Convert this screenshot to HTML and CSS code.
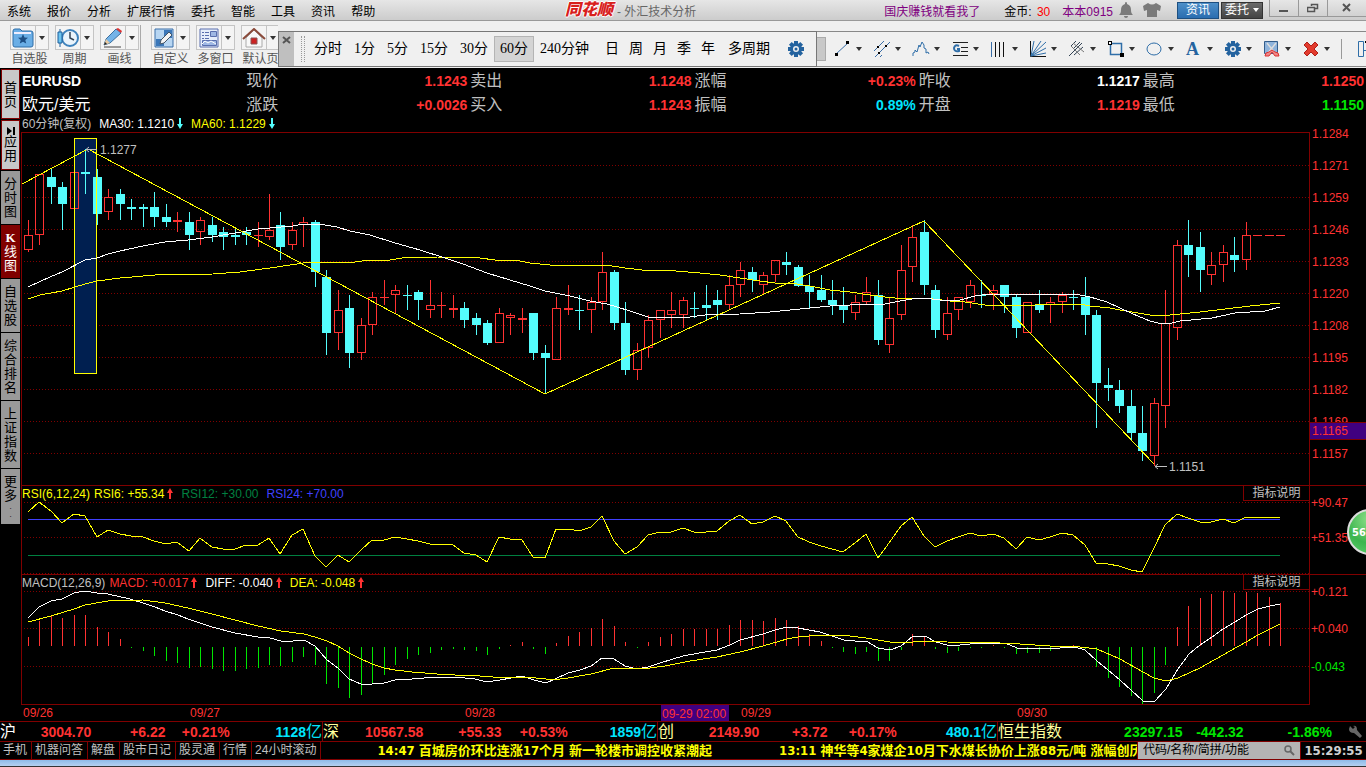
FILE: index.html
```
<!DOCTYPE html>
<html lang="zh-CN">
<head>
    <meta charset="UTF-8">
    <meta name="viewport" content="width=device-width, initial-scale=1.0">
    <title>同花顺 - 外汇技术分析</title>
    <link rel="stylesheet" href="styles.css">
</head>
<body>
    <header class="titlebar">
        <nav class="menu">
            <a href="#">系统</a><a href="#">报价</a><a href="#">分析</a><a href="#">扩展行情</a><a href="#">委托</a><a href="#">智能</a><a href="#">工具</a><a href="#">资讯</a><a href="#">帮助</a>
        </nav>
        <div class="title"><b class="logo">同花顺</b><span>- 外汇技术分析</span></div>
        <div class="account">
            <a class="promo" href="#">国庆赚钱就看我了</a>
            <span class="coins">金币: <b>30</b></span>
            <a class="user" href="#">本本0915</a>
            <svg class="bell" width="14" height="16" viewBox="0 0 14 16"><path d="M7 0c1 0 1 1 1 2 3 1 4 3 4 6 0 3 1 4 2 5H0c1-1 2-2 2-5 0-3 1-5 4-6 0-1 0-2 1-2zM5 14h4c0 1-1 2-2 2s-2-1-2-2z"/></svg>
            <svg class="shirt" width="18" height="14" viewBox="0 0 18 14"><path d="M5 0q4 3 8 0l5 3-1 5-3-1v7H4V7L1 8 0 3z"/></svg>
        </div>
        <button class="news-btn" type="button">资讯</button>
        <button class="trade-btn" type="button">委托<i class="caret"></i></button>
        <div class="window-btns">
            <button type="button" aria-label="最小化"><svg width="10" height="10"><path d="M0 7h9v2H0z" fill="#555"/></svg></button>
            <button type="button" aria-label="还原"><svg width="12" height="10" fill="none" stroke="#555"><path d="M4.500 3V1.500h6v4H8M.5 4.500h7v4h-7z" stroke-width="1.500"/></svg></button>
            <button type="button" aria-label="关闭"><svg width="10" height="10"><path d="M1 1l7 7M8 1L1 8" stroke="#555" stroke-width="2"/></svg></button>
        </div>
    </header>

    <div class="toolbar">
        <div class="main-tools">
            <div class="tool-group">
                <button class="tool" type="button">
                    <span class="tool-face"><svg width="22" height="20" viewBox="0 0 22 20"><path d="M1 17V3q0-2 2-2h5l2 2h9q2 0 2 2v12q0 2-2 2H3q-2 0-2-2z" fill="#6aaee6" stroke="#2f6ea8"/><path d="M2 5h17" stroke="#eef" stroke-width="2"/><path d="M11 6l1.500 3.500 3.500.3-2.700 2.300.9 3.500-3.200-1.900-3.200 1.900.9-3.500L6 9.800l3.500-.3z" fill="#1d4f85"/></svg></span><span class="tool-drop"><i class="caret"></i></span>
                    <span class="tool-name">自选股</span>
                </button>
                <button class="tool" type="button">
                    <span class="tool-face"><svg width="22" height="20" viewBox="0 0 22 20"><circle cx="13" cy="10" r="8" fill="#eaf4fc" stroke="#3f83bd" stroke-width="2"/><path d="M13 4v6l4 2" fill="none" stroke="#345" stroke-width="1.500"/><path d="M3 1v18" stroke="#1d5e9b"/><path d="M1 4h4v11H1z" fill="#6cc4f0" stroke="#1d5e9b"/></svg></span><span class="tool-drop"><i class="caret"></i></span>
                    <span class="tool-name">周期</span>
                </button>
                <button class="tool" type="button">
                    <span class="tool-face"><svg width="22" height="20" viewBox="0 0 22 20"><path d="M2 19h17" stroke="#444"/><path d="M2 17l2-6L14 1l5 4L8 15z" fill="#74b3e8" stroke="#3a6f9f"/><path d="M14 1l5 4 1-2-4-3z" fill="#d33"/><path d="M2 17l2-6 4 4z" fill="#e8c9a0"/><path d="M2 17l1-3 2 2z" fill="#222"/></svg></span><span class="tool-drop"><i class="caret"></i></span>
                    <span class="tool-name">画线</span>
                </button>
            </div>
            <div class="tool-group">
                <button class="tool" type="button">
                    <span class="tool-face"><svg width="22" height="20" viewBox="0 0 22 20"><path d="M2 1h18v18H2z" fill="#b8d6f2" stroke="#3a6ea8"/><path d="M11 2h8v8h-8zM3 11h8v7H3z" fill="#3b77b9"/><path d="M7 16l1-4 8-8 3 3-8 8z" fill="#f4f4f4" stroke="#456"/></svg></span><span class="tool-drop"><i class="caret"></i></span>
                    <span class="tool-name">自定义</span>
                </button>
                <button class="tool" type="button">
                    <span class="tool-face"><svg width="22" height="20" viewBox="0 0 22 20"><path d="M2 1h18v18H2z" fill="#e6eefb" stroke="#5a6fae"/><path d="M4 4.500h2M4 7.500h2M4 10.500h2M7 4.500h4M7 7.500h4M7 10.500h4" stroke="#5a6fae"/><path d="M12.500 3.500h6v5h-6zM4.500 12.500h14v5h-14z" fill="#9fb8e4" stroke="#5a6fae"/><path d="M4 16l3-3 3 2 3-2 5 3" fill="none" stroke="#fff"/></svg></span><span class="tool-drop"><i class="caret"></i></span>
                    <span class="tool-name">多窗口</span>
                </button>
                <button class="tool" type="button">
                    <span class="tool-face"><svg width="24" height="20" viewBox="0 0 24 20"><path d="M4 10v9h16v-9l-8-8z" fill="#f8f8f8" stroke="#aaa"/><path d="M1 11L12 1l11 10" fill="none" stroke="#8a4a3a" stroke-width="2"/><path d="M9 10h6v6H9z" fill="#c22" stroke="#855"/></svg></span><span class="tool-drop"><i class="caret"></i></span>
                    <span class="tool-name">默认页</span>
                </button>
            </div>
        </div>

        <div class="period-panel">
            <button class="panel-close" type="button" aria-label="关闭"><svg width="9" height="8"><path d="M1 1l7 6M8 1L1 7" stroke="#555" stroke-width="2"/></svg></button>
            <i class="grip"></i>
            <button type="button">分时</button>
            <button type="button">1分</button>
            <button type="button">5分</button>
            <button type="button">15分</button>
            <button type="button">30分</button>
            <button type="button" class="active">60分</button>
            <button type="button">240分钟</button>
            <div class="long-periods">
                <button type="button">日</button><button type="button">周</button><button type="button">月</button><button type="button">季</button><button type="button">年</button>
            </div>
            <button type="button">多周期</button>
            <button class="gear" type="button" aria-label="设置"><svg width="18" height="18" viewBox="0 0 18 18"><use href="#gear"/></svg></button>
        </div>

        <div class="draw-tools">
            <i class="hidden-tool"></i>
            <button type="button" aria-label="线段"><svg width="18" height="18"><path d="M2 14L14 3" stroke="#3a6ea8"/><path d="M1 13h3v3H1zM12 1h3v3h-3z"/></svg><i class="caret"></i></button>
            <button type="button" aria-label="平行线"><svg width="18" height="18"><path d="M1 11L11 1M2 17L17 2M7 17l2-2" stroke="#3a6ea8"/><path d="M4 6h2v2H4zM5 12h2v2H5zM12 5h2v2h-2z"/></svg><i class="caret"></i></button>
            <button type="button" aria-label="波浪"><svg width="18" height="18"><path d="M1 16v-3l2-1v-2l2 2 2-7 1 2 2-5 2 3v3l2 1v4l2-1 1 2" fill="none" stroke="#2f6ea8"/></svg><i class="caret"></i></button>
            <button type="button" aria-label="黄金分割"><svg width="18" height="18"><path d="M2 2.500h15M10 7.500h7M10 11.500h7M2 15.500h15" stroke="#222"/><path d="M8 6q-4-2-5 2 0 4 5 3V9H6" fill="none" stroke="#2f6ea8" stroke-width="2"/></svg><i class="caret"></i></button>
            <button type="button" aria-label="周期线"><svg width="18" height="18"><path d="M1.500 2v15" stroke="#3a6ea8"/><path d="M5.500 2v15M9.500 2v15M13.500 2v15" stroke="#111"/></svg><i class="caret"></i></button>
            <button type="button" aria-label="江恩角度线"><svg width="18" height="18"><path d="M1.500 1v15.500H17" stroke="#111" fill="none"/><path d="M2 16L5 1M2 16L12 1M2 16L17 2M2 16L17 8M2 16l15-3" stroke="#2f6ea8"/></svg><i class="caret"></i></button>
            <button type="button" aria-label="斜线组"><svg width="18" height="18"><path d="M3 6l5-5M5 9l7-7M1 16L14 3M6 15l9-8" stroke="#345"/><path d="M5 3l11 9M3 6l9 9" stroke="#777"/></svg><i class="caret"></i></button>
            <button type="button" aria-label="矩形"><svg width="18" height="18"><path d="M3.500 3.500h11v11h-11z" fill="none" stroke="#2f6ea8" stroke-width="1.500"/><path d="M1 1h4v4H1zM13 13h4v4h-4z"/><path d="M2 2h2v2H2z" fill="#fff"/></svg><i class="caret"></i></button>
            <button type="button" aria-label="椭圆"><svg width="18" height="18"><ellipse cx="8" cy="9" rx="7" ry="6" fill="none" stroke="#2f6ea8"/></svg><i class="caret"></i></button>
            <button class="text-tool" type="button" aria-label="文字">A<i class="caret"></i></button>
            <button type="button" aria-label="设置"><svg width="18" height="18" viewBox="0 0 18 18"><use href="#gear"/></svg><i class="caret"></i></button>
            <button type="button" aria-label="截图"><svg width="18" height="18"><path d="M1.500 1.500h13v12h-13z" fill="#8fb4dc" stroke="#345e8c"/><path d="M4 3l8 10M13 3L5 13" stroke="#ddd" stroke-width="1.500"/><path d="M2 16q0-4 4-4l3-2 3 2q4 0 4 4h-4l-3-4-3 4z" fill="#e88" stroke="#d33"/></svg><i class="caret"></i></button>
            <button type="button" aria-label="删除"><svg width="18" height="18"><path d="M2 5l3-3 4 4 4-4 3 3-4 4 4 4-3 3-4-4-4 4-3-3 4-4z" fill="#e23b2e" stroke="#b02018"/></svg><i class="caret"></i></button>
            <i class="divider"></i>
            <button class="cut" type="button" aria-label="布局"><svg width="18" height="18"><path d="M1.500 1.500h5v15h-5zM7 10.500h10" fill="none" stroke="#2f6ea8"/><path d="M8 1h9v2H8z"/></svg></button>
        </div>
    </div>

    <main class="workspace">
        <nav class="side-tabs">
            <a class="light short" href="#">首页</a>
            <a class="light" href="#"><svg width="8" height="8"><path d="M0 0l5 4-5 4zM6 0h2v8H6z"/></svg>应用</a>
            <a href="#">分时图</a>
            <a class="active" href="#"><b>K</b>线图</a>
            <a href="#">自选股</a>
            <a href="#">综合排名</a>
            <a href="#">上证指数</a>
            <a href="#">更多<span>.</span><span>.</span></a>
        </nav>

        <section class="content">
            <dl class="quote">
                <div class="name">EURUSD</div>
                <div><dt>现价</dt><dd class="up">1.1243</dd></div>
                <div><dt>卖出</dt><dd class="up">1.1248</dd></div>
                <div><dt>涨幅</dt><dd class="up">+0.23%</dd></div>
                <div><dt>昨收</dt><dd class="flat">1.1217</dd></div>
                <div><dt>最高</dt><dd class="up">1.1250</dd></div>
                <div class="name cn">欧元/美元</div>
                <div><dt>涨跌</dt><dd class="up">+0.0026</dd></div>
                <div><dt>买入</dt><dd class="up">1.1243</dd></div>
                <div><dt>振幅</dt><dd class="volume">0.89%</dd></div>
                <div><dt>开盘</dt><dd class="up">1.1219</dd></div>
                <div><dt>最低</dt><dd class="down">1.1150</dd></div>
            </dl>

            <div class="legend">
                <span class="gray">60分钟(复权)</span>
                <span class="flat">MA30: 1.1210<svg class="arrow fall" width="6" height="11"><use href="#arrow-down"/></svg></span>
                <span class="yellow">MA60: 1.1229<svg class="arrow fall" width="6" height="11"><use href="#arrow-down"/></svg></span>
            </div>

            <svg id="price" class="plot" viewBox="21 132 1345 353"></svg>

            <div class="pane">
                <svg id="rsi" class="plot" viewBox="21 485 1345 89"></svg>
                <div class="legend over">
                    <span class="yellow">RSI(6,12,24)</span>
                    <span class="yellow">RSI6: +55.34<svg class="arrow rise" width="6" height="11"><use href="#arrow-up"/></svg></span>
                    <span class="green">RSI12: +30.00</span>
                    <span class="blue">RSI24: +70.00</span>
                </div>
                <button class="explain" type="button">指标说明</button>
                <button class="speed-ball" type="button">56</button>
            </div>

            <div class="pane">
                <svg id="macd" class="plot" viewBox="21 574 1345 131"></svg>
                <div class="legend over">
                    <span class="gray">MACD(12,26,9)</span>
                    <span class="up">MACD: +0.017<svg class="arrow rise" width="6" height="11"><use href="#arrow-up"/></svg></span>
                    <span class="flat">DIFF: -0.040<svg class="arrow rise" width="6" height="11"><use href="#arrow-up"/></svg></span>
                    <span class="yellow">DEA: -0.048<svg class="arrow rise" width="6" height="11"><use href="#arrow-up"/></svg></span>
                </div>
                <button class="explain" type="button">指标说明</button>
            </div>

            <svg id="dates" class="plot" viewBox="21 705 1345 16"></svg>
        </section>
    </main>

    <div class="indexes">
        <div class="index sh"><span class="up"><i class="flat">沪</i>3004.70</span><span class="up">+6.22</span><span class="up">+0.21%</span><span class="volume">1128<i>亿</i></span></div>
        <div class="index sz"><span class="up"><i>深</i>10567.58</span><span class="up">+55.33</span><span class="up">+0.53%</span><span class="volume">1859<i>亿</i></span></div>
        <div class="index cy"><span class="up"><i>创</i>2149.90</span><span class="up">+3.72</span><span class="up">+0.17%</span><span class="volume">480.1<i>亿</i></span></div>
        <div class="index hs"><span class="down"><i>恒生指数</i>23297.15</span><span class="down">-442.32</span><span class="down">-1.86%</span>
            <svg width="14" height="14" viewBox="0 0 14 14"><path d="M2 1l3 3 2-2-2-1q4-1 4 4l5 6-2 2-6-5q-5 0-5-4z" fill="#666"/></svg>
        </div>
    </div>

    <footer class="statusbar">
        <nav class="links">
            <a href="#">手机</a><a href="#">机器问答</a><a href="#">解盘</a><a href="#">股市日记</a><a href="#">股灵通</a><a href="#">行情</a><a href="#">24小时滚动</a>
        </nav>
        <div class="ticker">
            <a href="#">14:47 百城房价环比连涨17个月 新一轮楼市调控收紧潮起</a>
            <a href="#">13:11 神华等4家煤企10月下水煤长协价上涨88元/吨 涨幅创历</a>
        </div>
        <label class="search">
            <input type="text" placeholder="代码/名称/简拼/功能" aria-label="代码/名称/简拼/功能">
            <svg width="11" height="11"><circle cx="4" cy="4" r="3" fill="none" stroke="#666" stroke-width="1.500"/><path d="M6 6l4 4" stroke="#666" stroke-width="2"/></svg>
        </label>
        <time class="clock">15:29:55</time>
    </footer>
    <div class="desktop-edge"></div>

    <svg class="defs" width="0" height="0">
        <symbol id="gear" viewBox="0 0 18 18">
            <g fill="#24639f">
                <path d="M7 1h4v16H7zM1 7h16v4H1z"/>
                <path d="M7 1h4v16H7zM1 7h16v4H1z" transform="rotate(45 9 9)"/>
                <circle cx="9" cy="9" r="6"/>
            </g>
            <circle cx="9" cy="9" r="3" fill="#f0f0f0"/><circle cx="9" cy="9" r="1.500" fill="#24639f"/>
        </symbol>
        <symbol id="arrow-down" viewBox="0 0 6 11"><path d="M2 0h2v6h2L3 11 0 6h2z"/></symbol>
        <symbol id="arrow-up" viewBox="0 0 6 11"><path d="M2 11h2V5h2L3 0 0 5h2z"/></symbol>
    </svg>
    <script src="script.js"></script>
</body>
</html>
```
FILE: styles.css
```
* {
    box-sizing: border-box;
}
body {
    margin: 0;
    background: #000;
    font-family: "Liberation Sans", "Noto Sans CJK SC", sans-serif;
    font-size: 12px;
    overflow-x: hidden;
}
a {
    color: inherit;
    text-decoration: none;
}
button {
    margin: 0;
    padding: 0;
    border: none;
    background: none;
    font: inherit;
    color: inherit;
    cursor: pointer;
}
i {
    font-style: normal;
}
.caret {
    display: inline-block;
    border: 3px solid transparent;
    border-top: 4px solid #333;
    border-bottom: none;
}
.defs {
    position: absolute;
}

/* title bar */
.titlebar {
    display: flex;
    align-items: center;
    height: 21px;
    background: linear-gradient(#e6e6e6, #cccccc);
    border-bottom: 1px solid #999;
    white-space: nowrap;
}
.menu {
    display: flex;
    gap: 16px;
    padding-left: 7px;
    color: #000;
}
.title {
    display: flex;
    align-items: center;
    gap: 4px;
    margin-left: auto;
    padding-left: 2px;
    color: #666;
}
.logo {
    font-size: 16px;
    line-height: 18px;
    font-style: italic;
    font-weight: 900;
    color: #d8201c;
    text-shadow: 1px 0 #fff, -1px 0 #fff, 0 1px #fff, 0 -1px #fff;
}
.account {
    display: flex;
    align-items: center;
    margin-left: auto;
    color: #000;
}
.account svg {
    fill: #7a7a7a;
}
.promo {
    color: #800080;
}
.coins {
    margin: 0 12px 0 24px;
}
.coins b {
    margin-left: 2px;
    font-weight: normal;
    color: #f00;
}
.user {
    color: #800080;
}
.bell {
    margin: 0 10px 0 6px;
}
.shirt {
    margin-right: 16px;
}
.news-btn, .trade-btn {
    width: 42px;
    height: 17px;
    line-height: 15px;
    border: 1px solid #1d4f80;
    background: linear-gradient(#4d8fc8, #2a6db0);
    color: #fff;
}
.trade-btn {
    margin: 0 6px 0 2px;
    border-color: #333;
    background: linear-gradient(#6a6a6a, #444);
}
.trade-btn .caret {
    margin-left: 4px;
    vertical-align: middle;
    border-top-color: #fff;
}
.window-btns {
    display: flex;
    align-self: flex-start;
}
.window-btns button {
    display: flex;
    align-items: center;
    justify-content: center;
    width: 29px;
    height: 17px;
    border: 1px solid #999;
    border-width: 0 0 1px 1px;
}
.window-btns button:last-child {
    width: 39px;
}

/* toolbar */
.toolbar {
    display: flex;
    height: 47px;
    padding-top: 1px;
    background: #f0f0f0;
    overflow: hidden;
}
.main-tools {
    display: flex;
    flex: none;
    width: 278px;
    overflow: hidden;
}
.tool-group {
    display: flex;
    flex: none;
    gap: 6px;
    width: 141px;
    margin-top: 3px;
    padding-left: 10px;
    border-right: 1px solid #aaa;
}
.tool {
    display: grid;
    grid-template-columns: 26px 13px;
    grid-template-rows: 25px 16px;
    width: 39px;
    color: #555;
}
.tool-face, .tool-drop {
    display: flex;
    align-items: center;
    justify-content: center;
    border: 1px solid #c4c4c4;
    background: #f4f4f4;
}
.tool-drop {
    border-left: none;
}
.tool-name {
    grid-column: 1 / 3;
    line-height: 18px;
    text-align: center;
    white-space: nowrap;
}
.period-panel {
    display: flex;
    flex: none;
    align-items: center;
    width: 539px;
    height: 36px;
    margin-top: 9px;
    border: 1px solid #777;
    font: 14px/24px "Liberation Serif", "Noto Sans CJK SC", serif;
    color: #000;
    white-space: nowrap;
}
.period-panel button {
    padding: 0 6px;
}
.period-panel .panel-close {
    width: 15px;
    height: 34px;
    padding: 0 0 18px;
    line-height: 8px;
    background: #bfbfbf;
}
.grip {
    width: 4px;
    height: 26px;
    margin: 0 3px 0 7px;
    border: 1px dotted #999;
    border-width: 0 1px;
}
.period-panel .active {
    height: 26px;
    padding: 0 5px;
    border: 1px solid #b4b4b4;
    background: #d4d4d4;
}
.long-periods {
    display: flex;
    margin: 0 2px 0 5px;
}
.long-periods button {
    padding: 0 5px;
}
.period-panel .gear {
    display: flex;
    margin-left: auto;
    padding: 0 11px 0 0;
}
.draw-tools {
    display: flex;
    flex: 1;
    align-items: center;
    height: 36px;
    margin-top: 9px;
    border: 1px solid #888;
    border-width: 1px 0;
    overflow: hidden;
}
.draw-tools button {
    display: flex;
    flex: none;
    align-items: center;
    gap: 4px;
    width: 39px;
}
.hidden-tool {
    flex: none;
    width: 9px;
    height: 24px;
    margin-right: 8px;
    border: 1px solid #aaa;
    border-left: none;
    background: #c8c8c8;
}
.draw-tools .text-tool {
    gap: 8px;
    padding-left: 1px;
    font: bold 18px "Liberation Serif", serif;
    color: #24639f;
}
.divider {
    flex: none;
    width: 1px;
    height: 20px;
    margin-right: 15px;
    background: #999;
}

/* side tabs */
.workspace {
    display: flex;
}
.side-tabs {
    display: flex;
    flex-direction: column;
    gap: 1px;
    flex: none;
    width: 21px;
    padding: 1px 1px 0;
}
.side-tabs a {
    display: flex;
    flex-direction: column;
    align-items: center;
    padding: 6px 3px 5px;
    background: #999;
    color: #000;
    font-size: 13px;
    line-height: 14px;
    word-break: break-all;
}
.side-tabs .light {
    padding: 6px 2px;
    border: 1px solid #800000;
    background: #c8c8c8;
}
.side-tabs .short {
    padding: 11px 2px 9px;
}
.side-tabs .active {
    background: #800000;
    color: #fff;
}
.side-tabs b {
    font-family: "Liberation Serif", serif;
}
.side-tabs span {
    font-size: 8px;
    line-height: 8px;
}
.content {
    flex: 1;
    min-width: 0;
}

/* quote */
.quote {
    display: grid;
    grid-template-columns: repeat(6, 1fr);
    grid-auto-rows: 24px;
    margin: 0;
    padding-top: 1px;
    font-size: 16px;
    line-height: 24px;
    color: #c0c0c0;
}
.quote div {
    display: flex;
    justify-content: space-between;
    padding: 0 2px 0 1px;
}
.quote dd {
    margin: 0;
    font-size: 14px;
    font-weight: bold;
}
.quote .name {
    color: #fff;
    font-size: 14px;
    font-weight: bold;
}
.quote .cn {
    justify-content: flex-start;
    font-size: 16px;
    font-weight: normal;
}
.up {
    color: #ff3232;
}
.down {
    color: #00e600;
}
.flat {
    color: #fff;
}
.volume {
    color: #00e6ff;
}
.yellow {
    color: #ff0;
}
.gray {
    color: #c0c0c0;
}
.green {
    color: #008040;
}
.blue {
    color: #4040ff;
}

/* charts */
.legend {
    display: flex;
    gap: 8px;
    height: 15px;
    padding-left: 1px;
    line-height: 15px;
    white-space: nowrap;
}
.legend.over {
    position: absolute;
    top: 2px;
    left: 0;
}
.legend.over span:first-child {
    margin-right: -4px;
}
.arrow {
    margin-left: 3px;
    vertical-align: -1px;
}
.fall {
    fill: #54fcfc;
}
.rise {
    fill: #ff3232;
}
.pane {
    position: relative;
    overflow: hidden;
}
.plot {
    display: block;
    width: 100%;
    font-size: 12px;
    overflow: visible;
}
.plot line, .plot rect, .plot polyline {
    shape-rendering: crispEdges;
}
.plot polyline {
    fill: none;
}
.explain {
    position: absolute;
    top: 1px;
    right: 57px;
    width: 66px;
    height: 15px;
    border: 1px solid #800000;
    border-width: 0 0 1px 1px;
    line-height: 14px;
    color: #c0c0c0;
}
.speed-ball {
    position: absolute;
    top: 24px;
    right: -27px;
    width: 46px;
    height: 46px;
    padding: 0 22px 0 0;
    border: 2px solid #ddd;
    border-radius: 50%;
    background: radial-gradient(circle at 50% 20%, #8fe08a, #3cb54e 60%, #5ccf6c);
    font: bold 11px "DejaVu Sans Condensed", sans-serif;
    color: #fff;
}

/* index row */
.indexes {
    display: grid;
    grid-template-columns: 323fr 335fr 340fr 368fr;
    height: 20px;
    border-top: 1px solid #800000;
    font-size: 14px;
    font-weight: bold;
    line-height: 20px;
    white-space: nowrap;
}
.index {
    display: grid;
    align-items: center;
    border-right: 1px solid #800000;
}
.index:last-child {
    border-right: none;
}
.index span {
    display: flex;
    justify-content: flex-end;
}
.index i {
    font-size: 16px;
    font-weight: normal;
}
.index span:first-child {
    justify-content: space-between;
}
.index span:first-child i:not(.flat) {
    color: #ffff9c;
}
.sh {
    grid-template-columns: 91fr 74fr 64fr 92fr;
}
.sz {
    grid-template-columns: 100fr 78fr 66fr 89fr;
}
.cy {
    grid-template-columns: 101fr 68fr 69fr 100fr;
}
.hs {
    grid-template-columns: 184fr 61fr 88fr 34fr;
}
.hs svg {
    justify-self: end;
    margin-right: 4px;
}

/* status bar */
.statusbar {
    display: flex;
    height: 19px;
    border: 1px solid #800000;
    border-width: 1px 0;
    line-height: 17px;
    white-space: nowrap;
}
.links {
    display: flex;
    color: #c0c0c0;
}
.links a {
    padding: 0 4px 0 3px;
    border-right: 1px solid #800000;
}
.ticker {
    display: flex;
    flex: 1;
    gap: 67px;
    min-width: 0;
    padding-left: 56px;
    overflow: hidden;
    font: bold 13px/17px "DejaVu Sans Condensed", "Noto Sans CJK SC", sans-serif;
    color: #ff0;
}
.search {
    display: flex;
    flex: none;
    align-items: center;
    width: 163px;
    background: #b4b4b4;
    border-left: 1px solid #800000;
}
.search input {
    flex: 1;
    min-width: 0;
    padding: 0 0 0 5px;
    border: none;
    background: none;
    font: inherit;
    color: #000;
}
.search input::placeholder {
    color: #000;
    opacity: 1;
}
.search svg {
    margin-right: 5px;
}
.clock {
    flex: none;
    width: 66px;
    border-left: 1px solid #800000;
    text-align: center;
    font: bold 13px/17px "DejaVu Sans Condensed", sans-serif;
    color: #d0d0d0;
}
.desktop-edge {
    height: 7px;
    background: linear-gradient(#8ebbe8, #b4d0f0);
    border-bottom: 1px solid #333;
}
```
FILE: script.js
```
const RED = '#ff3232';
const CYAN = '#54fcfc';
const YELLOW = '#ffff00';
const GREEN = '#00e600';
const BORDER = '#800000';

// r = up bar, c = down bar: [type, high, body top, body bottom, low]
const candles = [
    ['r',220,235,250,252], ['r',174,174,235,245], ['c',169,177,187,204], ['c',182,187,204,230], ['r',172,172,209,209],
    ['c',149,172,174,194], ['c',169,177,214,225], ['r',189,197,212,220], ['c',189,194,204,220], ['c',199,207,209,220],
    ['c',204,207,209,227], ['c',192,207,217,227], ['c',204,217,222,227], ['r',212,220,222,232], ['c',212,222,235,250],
    ['r',217,220,232,245], ['c',217,225,235,242], ['c',227,232,237,250], ['c',227,235,237,245], ['c',227,232,235,245],
    ['r',222,235,236,247], ['r',194,230,237,240], ['c',212,225,247,260], ['r',222,230,245,250], ['r',217,222,225,247],
    ['c',220,222,272,287], ['c',270,277,333,355], ['r',290,310,333,350], ['c',295,308,353,368], ['r',318,325,353,360],
    ['r',292,297,325,335], ['r',280,297,298,305], ['r',285,290,295,313], ['c',285,295,296,310], ['c',290,292,300,320],
    ['r',280,305,310,318], ['r',292,305,306,318], ['r',295,308,310,318], ['c',302,308,320,328], ['c',313,318,325,335],
    ['c',320,323,343,345], ['r',308,313,343,343], ['r',313,315,318,335], ['r',308,318,320,333], ['c',313,313,353,360],
    ['c',345,353,358,393], ['r',297,308,360,360], ['r',285,308,310,315], ['c',295,310,311,330], ['r',297,302,310,333],
    ['r',252,272,302,310], ['c',270,272,323,330], ['c',302,323,370,375], ['r',343,350,370,380], ['r',315,320,348,358],
    ['r',310,310,320,338], ['r',292,310,315,328], ['r',297,300,315,328], ['c',292,308,309,318], ['c',285,305,308,320],
    ['c',290,300,305,320], ['r',275,285,305,310], ['r',262,270,285,297], ['c',267,272,280,292], ['r',272,275,285,295],
    ['r',260,260,275,282], ['c',252,262,265,275], ['c',265,267,286,287], ['c',275,286,292,308], ['c',275,290,300,302],
    ['c',280,300,305,315], ['c',287,305,310,323], ['r',295,302,313,320], ['r',277,292,302,305], ['c',280,295,340,345],
    ['r',297,318,345,353], ['r',245,270,315,320], ['r',225,237,267,282], ['c',220,232,285,295], ['c',285,290,330,338],
    ['r',297,313,335,340], ['r',297,297,310,320], ['r',280,285,302,308], ['c',280,295,296,308], ['r',285,290,294,310],
    ['c',285,285,297,313], ['c',295,297,328,338], ['r',302,302,333,333], ['c',290,305,310,313], ['r',297,302,305,323],
    ['r',292,295,302,313], ['c',290,297,298,310], ['c',277,297,315,335], ['c',310,315,383,428], ['c',368,385,388,401],
    ['c',380,390,406,413], ['c',390,406,433,441], ['c',406,433,451,461], ['r',398,403,456,466], ['r',290,323,406,428],
    ['r',240,245,328,340], ['c',220,245,255,277], ['c',232,247,270,292], ['r',252,265,275,285], ['r',245,252,265,282],
    ['c',237,255,260,272], ['r',222,235,260,270]
];

const ma30 = '28,287 50,277 62,272 85,260 97,258 108,254 120,251 143,246 165,242 188,240 212,237 235,233 258,229 270,228 293,226 304,224 325,225 337,227 350,231 370,235 395,243 420,250 445,258 463,264 487,273 510,280 530,286 545,291 570,296 590,301 607,304 630,311 648,317 665,318 690,317 705,315 740,314 770,312 800,309 830,306 870,304 885,304 900,301 918,298 932,299 948,301 960,300 975,296 990,294 1075,294 1090,297 1107,302 1120,308 1133,314 1150,321 1158,323 1172,323 1180,321 1212,318 1235,313 1265,311 1280,307';
const ma60 = '28,299 40,295 62,291 85,284 97,281 120,278 155,275 213,274 240,272 270,268 290,265 310,262 355,262 370,260 390,260 402,258 425,257 437,257 480,258 495,260 515,260 530,263 550,265 600,265 612,266 625,268 642,270 676,271 700,273 720,275 740,278 760,281 775,283 790,283 810,286 830,290 850,292 870,295 885,297 895,298 925,298 950,301 965,302 985,305 1035,305 1050,304 1080,304 1090,306 1110,308 1120,310 1150,315 1170,315 1200,312 1225,309 1250,306 1280,303';
const zigzag = '22,184 88,149 545,394 924,221 1154,464';

const rsi6 = [512,502,511,523,514,516,537,530,534,536,537,541,544,542,551,538,547,549,549,545,545,538,554,535,529,556,567,555,562,550,540,540,537,539,541,544,544,545,553,555,562,537,539,540,557,558,529,529,531,527,516,541,554,547,535,532,532,528,532,532,531,521,515,524,522,516,521,537,542,546,549,552,543,534,558,543,526,517,536,547,541,537,533,536,534,538,549,537,540,537,533,535,545,563,564,566,570,572,548,525,514,518,522,522,519,523,517,517,517,517];

// bar ends, measured from the zero line at 646
const macdBars = [637,621,616,618,615,615,627,632,639,648,651,656,661,663,668,667,669,671,671,669,668,665,666,662,657,665,684,688,698,695,684,675,665,659,655,653,650,649,650,651,655,649,645,642,649,654,643,636,632,628,619,626,642,648,642,637,634,629,629,629,629,625,620,620,621,618,620,626,634,641,648,652,654,652,661,661,650,634,637,649,653,651,648,648,645,648,654,653,653,651,648,645,649,667,678,687,696,704,693,665,627,606,598,594,591,593,592,593,597,603];
const diff = '28,618 39,607 51,601 62,599 74,593 85,591 97,593 108,594 130,599 143,603 155,607 165,611 178,615 188,619 212,627 235,633 258,637 270,638 281,641 293,641 304,640 315,646 327,660 338,668 349,679 361,684 372,684 384,683 395,680 412,679 437,677 455,677 475,679 487,682 500,680 522,676 534,680 546,683 555,679 568,673 580,670 591,666 602,658 614,659 625,666 637,669 648,667 660,663 683,656 705,652 717,650 730,645 740,640 763,634 775,630 787,627 798,628 820,632 832,636 844,640 855,641 866,641 878,648 890,650 901,646 913,636 925,636 936,642 947,645 960,645 970,644 990,643 1005,643 1017,648 1040,649 1060,648 1075,647 1085,650 1097,661 1108,670 1120,680 1131,690 1143,701 1154,702 1166,689 1178,669 1189,654 1200,645 1212,637 1223,629 1235,622 1246,615 1258,609 1270,606 1280,604';
const dea = '28,622 51,616 74,609 85,605 108,601 143,600 165,603 188,608 212,614 235,620 258,626 281,631 304,634 315,637 327,641 338,646 349,653 361,659 372,664 384,668 395,670 412,672 437,674 455,675 480,676 505,678 525,677 546,679 560,679 568,678 591,674 614,668 650,668 665,666 690,661 717,657 740,652 763,646 787,639 798,637 820,635 850,636 866,638 890,642 901,643 913,642 925,641 947,642 1000,643 1020,644 1050,646 1080,647 1097,649 1120,659 1143,672 1154,678 1166,681 1178,678 1200,668 1223,655 1246,642 1258,635 1280,624';

function add(id, name, attrs, text) {
    const el = document.createElementNS('http://www.w3.org/2000/svg', name);
    for (const key in attrs) {
        el.setAttribute(key, attrs[key]);
    }
    if (text) {
        el.textContent = text;
    }
    document.getElementById(id).appendChild(el);
}

function barX(i) {
    return Math.floor(28.2 + 11.49 * i);
}

function box(id, x, y, width, height, fill) {
    add(id, 'rect', { x, y, width, height, fill });
}

function outline(id, x, y, width, height, stroke) {
    add(id, 'rect', { x: x + 0.5, y: y + 0.5, width: width - 1, height: height - 1, fill: 'none', stroke });
}

function gridLine(id, y) {
    add(id, 'line', { x1: 24, x2: 1309, y1: y + 0.5, y2: y + 0.5, stroke: BORDER, 'stroke-dasharray': '1 2' });
}

function curve(id, points, stroke) {
    add(id, 'polyline', { points, stroke });
}

function label(id, x, y, text, fill) {
    add(id, 'text', { x, y, fill }, text);
}

function frame(id, top, bottom, right) {
    box(id, 21, top, right - 21, 1, BORDER);
    box(id, 21, top, 1, bottom - top, BORDER);
    box(id, 1309, top, 1, bottom - top, BORDER);
}

function drawPrice() {
    frame('price', 132, 485, 1310);
    ['1.1284', '1.1271', '1.1259', '1.1246', '1.1233', '1.1220', '1.1208', '1.1195', '1.1182', '1.1169', '1.1157'].forEach((price, i) => {
        if (i > 0) {
            gridLine('price', 133 + 32 * i);
        }
        label('price', 1312, 138 + 32 * i, price, RED);
    });
    box('price', 1310, 422, 56, 18, '#400080');
    box('price', 1310, 422, 56, 1, BORDER);
    box('price', 1310, 439, 56, 1, BORDER);
    label('price', 1312, 435, '1.1165', RED);

    box('price', 74, 138, 23, 236, '#001f50');
    candles.forEach(([type, high, top, bottom, low], i) => {
        const x = barX(i);
        const color = type === 'r' ? RED : CYAN;
        box('price', x, high, 1, top - high, color);
        box('price', x, bottom, 1, low - bottom, color);
        if (type === 'r' && bottom - top > 2) {
            outline('price', x - 4, top, 9, bottom - top, color);
        } else {
            box('price', x - 4, top, 9, bottom - top, color);
        }
    });
    [1253, 1265, 1276].forEach(x => box('price', x, 235, 9, 1, RED));
    outline('price', 74, 138, 23, 236, YELLOW);
    curve('price', ma60, YELLOW);
    curve('price', ma30, '#ffffff');
    curve('price', zigzag, YELLOW);

    add('price', 'path', { d: 'M86 149.500h11M89 147l-3 2.500 3 2.500M1155 466.500h12M1158 464l-3 2.500 3 2.500', stroke: '#c0c0c0', fill: 'none' });
    label('price', 100, 154, '1.1277', '#c0c0c0');
    label('price', 1169, 471, '1.1151', '#c0c0c0');
}

function drawRsi() {
    frame('rsi', 485, 574, 1366);
    [502, 537, 573].forEach(y => gridLine('rsi', y));
    label('rsi', 1311, 507, '+90.47', RED);
    label('rsi', 1311, 542, '+51.35', RED);
    box('rsi', 28, 519, 1252, 1, '#4040ff');
    box('rsi', 28, 555, 1252, 1, '#008040');
    curve('rsi', rsi6.map((y, i) => barX(i) + ',' + y).join(' '), YELLOW);
}

function drawMacd() {
    frame('macd', 574, 705, 1366);
    box('macd', 21, 704, 1289, 1, BORDER);
    [591, 628, 666].forEach(y => gridLine('macd', y));
    label('macd', 1311, 596, '+0.121', RED);
    label('macd', 1311, 633, '+0.040', RED);
    label('macd', 1311, 671, '-0.043', GREEN);
    macdBars.forEach((end, i) => {
        if (end < 646) {
            box('macd', barX(i), end, 1, 646 - end, RED);
        } else {
            box('macd', barX(i), 647, 1, end - 647, GREEN);
        }
    });
    curve('macd', diff, '#ffffff');
    curve('macd', dea, YELLOW);
}

function drawDates() {
    [[23, '09/26'], [190, '09/27'], [465, '09/28'], [741, '09/29'], [1017, '09/30']].forEach(([x, day]) => {
        label('dates', x, 717, day, RED);
    });
    box('dates', 661, 705, 68, 16, '#400080');
    label('dates', 662, 718, '09-29 02:00', RED);
}

drawPrice();
drawRsi();
drawMacd();
drawDates();
```
